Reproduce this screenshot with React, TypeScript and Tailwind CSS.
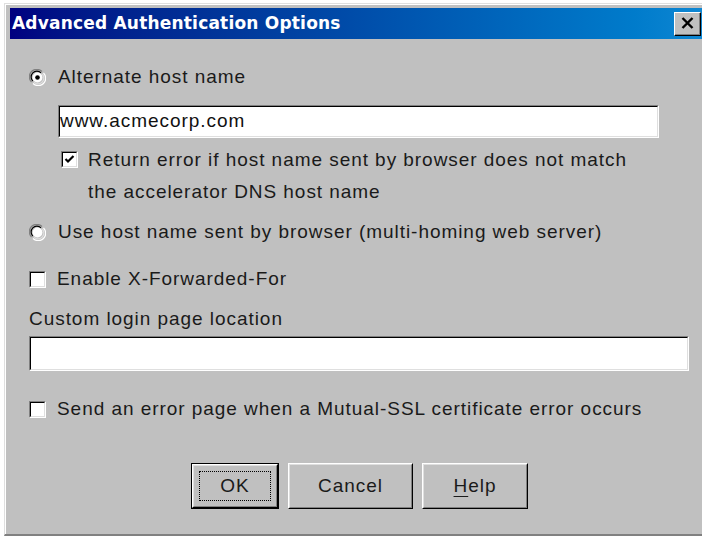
import React from 'react';

const sans = { fontFamily: '"Liberation Sans", Arial, sans-serif' };

function Radio({ checked }: { checked?: boolean }) {
  return (
    <svg width="17" height="17" viewBox="0 0 17 17" className="shrink-0">
      <path d="M2.5 13 A7 7 0 0 1 13 2.5" fill="none" stroke="#808080" strokeWidth="1.2" />
      <path d="M3.8 12 A5.6 5.6 0 0 1 12 3.8" fill="none" stroke="#000" strokeWidth="1.2" />
      <path d="M14.5 4 A7 7 0 0 1 4 14.5" fill="none" stroke="#fff" strokeWidth="1.2" />
      <path d="M13.2 5 A5.6 5.6 0 0 1 5 13.2" fill="none" stroke="#dfdfdf" strokeWidth="1.2" />
      <circle cx="8.5" cy="8.5" r="4.9" fill="#fff" />
      {checked && <circle cx="8.5" cy="8.5" r="2.3" fill="#000" />}
    </svg>
  );
}

function Check({ checked }: { checked?: boolean }) {
  return (
    <div className="w-[17px] h-[17px] shrink-0 border-t border-l border-t-[#808080] border-l-[#808080] border-b border-r border-b-white border-r-white">
      <div className="w-full h-full bg-white border-t border-l border-t-black border-l-black border-b border-r border-b-[#dfdfdf] border-r-[#dfdfdf] flex items-center justify-center">
        {checked && (
          <svg width="11" height="11" viewBox="0 0 11 11">
            <path d="M1.5 5 L4 7.5 L9.5 2" fill="none" stroke="#000" strokeWidth="2.2" />
          </svg>
        )}
      </div>
    </div>
  );
}

function Field({ value, className }: { value?: string; className: string }) {
  return (
    <div className={`border-t border-l border-t-[#808080] border-l-[#808080] border-b border-r border-b-white border-r-white ${className}`}>
      <div className="w-full h-full bg-white border-t border-l border-t-black border-l-black border-b border-r border-b-[#dfdfdf] border-r-[#dfdfdf] flex items-center text-[#111]">
        {value}
      </div>
    </div>
  );
}

function Button({ children, width, isDefault }: { children: React.ReactNode; width: string; isDefault?: boolean }) {
  return (
    <div className={`h-[46px] ${width} ${isDefault ? 'border border-black' : ''}`}>
      <div className="w-full h-full bg-[#c0c0c0] border-t border-l border-t-white border-l-white border-b border-r border-b-black border-r-black">
        <div className="w-full h-full border-t border-l border-t-[#dfdfdf] border-l-[#dfdfdf] border-b border-r border-b-[#808080] border-r-[#808080] flex items-center justify-center p-[5px]">
          {isDefault ? (
            <div className="w-full h-full border border-dotted border-black flex items-center justify-center">{children}</div>
          ) : (
            children
          )}
        </div>
      </div>
    </div>
  );
}

export default function App() {
  return (
    <div className="w-[702px] h-[537px] bg-white overflow-hidden" style={sans}>
      <div className="ml-[4px] mt-[3px] w-[710px] h-[533px] bg-[#c0c0c0] border-l border-t border-l-[#dfdfdf] border-t-[#dfdfdf] border-b-2 border-b-[#808080]">
        <div className="w-full h-full border-l border-t border-l-white border-t-white pl-[4px] pt-[3px]">
          {/* title bar */}
          <div className="h-[31px] w-[700px] flex items-center justify-between bg-gradient-to-r from-[#000080] to-[#1088d4] pl-[2px] pr-[9px]">
            <span className="text-white font-bold tracking-[0.2px]" style={{ fontFamily: '"DejaVu Sans", Tahoma, sans-serif', fontSize: 17 }}>
              Advanced Authentication Options
            </span>
            <div className="w-[27px] h-[24px] bg-[#c0c0c0] border-t border-l border-t-white border-l-white border-b border-r border-b-black border-r-black">
              <div className="w-full h-full border-b border-r border-b-[#808080] border-r-[#808080] flex items-center justify-center">
                <svg width="13" height="12" viewBox="0 0 13 12">
                  <path d="M1.5 1 L11.5 11 M11.5 1 L1.5 11" stroke="#000" strokeWidth="2.4" />
                </svg>
              </div>
            </div>
          </div>

          <div className="pl-[19px] text-[19px] tracking-[0.95px] text-[#1a1a1a]">
            <label className="mt-[26px] h-[24px] flex items-center gap-[12px]">
              <Radio checked />
              <span>Alternate host name</span>
            </label>

            <Field value="www.acmecorp.com" className="ml-[29px] mt-[16px] w-[601px] h-[33px]" />

            <div className="ml-[32px] mt-[6px] flex gap-[10px] leading-[32px]">
              <div className="pt-[7px]">
                <Check checked />
              </div>
              <span>
                Return error if host name sent by browser does not match
                <br />
                the accelerator DNS host name
              </span>
            </div>

            <label className="mt-[8px] h-[32px] flex items-center gap-[12px]">
              <Radio />
              <span>Use host name sent by browser (multi-homing web server)</span>
            </label>

            <label className="mt-[15px] h-[32px] flex items-center gap-[11px]">
              <Check />
              <span>Enable X-Forwarded-For</span>
            </label>

            <div className="mt-[8px] h-[32px] flex items-center">Custom login page location</div>

            <Field className="mt-[1px] w-[660px] h-[35px]" />

            <label className="mt-[22px] h-[32px] flex items-center gap-[11px]">
              <Check />
              <span>Send an error page when a Mutual-SSL certificate error occurs</span>
            </label>

            <div className="mt-[38px] ml-[162px] flex gap-[9px]">
              <Button width="w-[88px]" isDefault>
                OK
              </Button>
              <Button width="w-[125px]">Cancel</Button>
              <Button width="w-[106px]">
                <span>
                  <span className="underline underline-offset-[4px]">H</span>elp
                </span>
              </Button>
            </div>
          </div>
        </div>
      </div>
    </div>
  );
}
